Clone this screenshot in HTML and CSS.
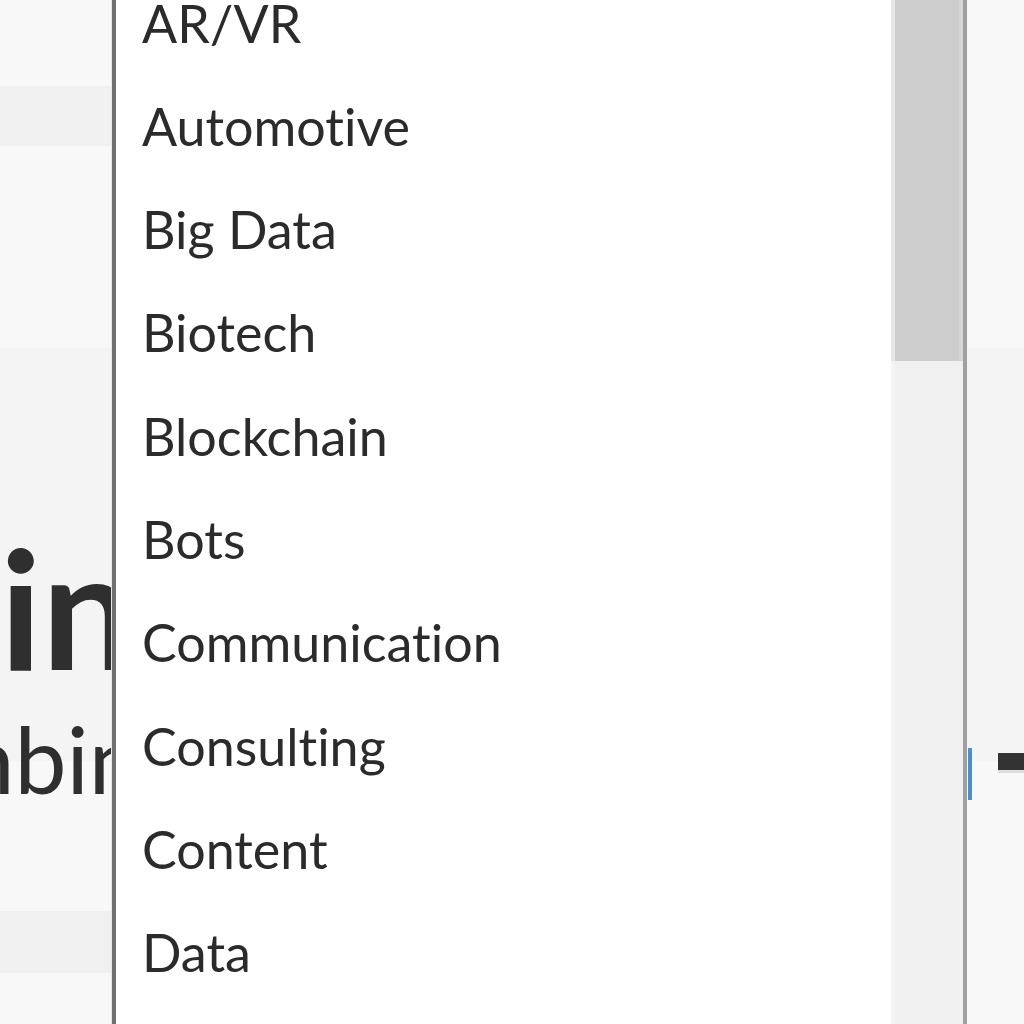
FILE: index.html
```html
<!DOCTYPE html>
<html lang="en">
<head>
<meta charset="utf-8">
<title>Industry select</title>
<link rel="stylesheet" href="styles.css">
</head>
<body>
<div class="page">
  <div class="strip strip-top"></div>
  <div class="band"></div>
  <div class="strip strip-mid"></div>
  <section class="hero">
    <h1 class="hero-title">in</h1>
    <div class="hero-sub">
      <p class="hero-sub-text">Combining</p>
      <span class="focus-mark"></span>
      <span class="dash-mark"></span>
    </div>
  </section>
  <div class="strip strip-low"></div>
  <div class="band band-low"></div>
</div>

<div class="dropdown">
  <div class="options">
    <ul class="option-list">
      <li>AR/VR</li>
      <li>Automotive</li>
      <li>Big Data</li>
      <li>Biotech</li>
      <li>Blockchain</li>
      <li>Bots</li>
      <li>Communication</li>
      <li>Consulting</li>
      <li>Content</li>
      <li>Data</li>
      <li>Design</li>
    </ul>
  </div>
  <div class="scrollbar">
    <div class="thumb"></div>
  </div>
</div>
</body>
</html>
```
FILE: styles.css
```css
html, body {
  margin: 0;
  padding: 0;
}
body {
  width: 1024px;
  height: 1024px;
  overflow: hidden;
  background: #f8f8f8;
  font-family: "Lato", "Open Sans", sans-serif;
  font-variant-ligatures: none;
  font-feature-settings: "liga" 0, "clig" 0;
  color: #2d2d2d;
  position: relative;
}
.page {
  display: flex;
  flex-direction: column;
}
.strip-top { height: 86px; }
.band {
  height: 60px;
  width: 50%;
  background: #f1f1f1;
}
.strip-mid { height: 202px; }
.hero {
  height: 413px;
  background: #f4f4f4;
  padding-top: 177px;
  box-sizing: border-box;
}
.hero-title {
  margin: 0;
  font-size: 164px;
  line-height: 164px;
  font-weight: 700;
  color: #2f2f2f;
}
.hero-sub {
  margin-top: 23px;
  height: 93px;
  display: flex;
  align-items: flex-start;
}
.hero-sub-text {
  margin: 0 0 0 -176px;
  font-size: 93px;
  line-height: 93px;
  font-weight: 400;
  color: #2f2f2f;
}
.focus-mark {
  margin-left: auto;
  margin-right: 26px;
  margin-top: 36px;
  width: 4px;
  height: 52px;
  background: #4a8ed6;
}
.dash-mark {
  margin-top: 41px;
  margin-right: -16px;
  width: 42px;
  height: 17px;
  background: #333333;
  box-shadow: 0 3px 0 #dedede;
}
.strip-low { height: 150px; }
.band-low {
  height: 62px;
  width: 50%;
  background: #f0f0f0;
}

/* dropdown list overlay */
.dropdown {
  position: absolute;
  top: 0;
  left: 112px;
  height: 1100px;
  display: flex;
  background: #ffffff;
  border-left: 4px solid #6f6f6f;
  border-right: 4px solid #a0a0a0;
  box-shadow: -1px 0 0 #e6e6e6;
}
.options {
  width: 775px;
  overflow: hidden;
}
.option-list {
  list-style: none;
  margin: -28.5px 0 0 0;
  padding: 0 0 0 26px;
  font-size: 52px;
  line-height: 103.3px;
  color: #2b2b2b;
}
.option-list li {
  height: 103.3px;
  white-space: nowrap;
}
.scrollbar {
  width: 68px;
  background: #f0f0f0;
  border-left: 4px solid #f4f4f4;
}
.thumb {
  height: 361px;
  width: 64px;
  background: #cdcdcd;
  border-right: 4px solid #d6d6d6;
  margin-left: -4px;
  border-left: 4px solid #e6e6e6;
}
```
